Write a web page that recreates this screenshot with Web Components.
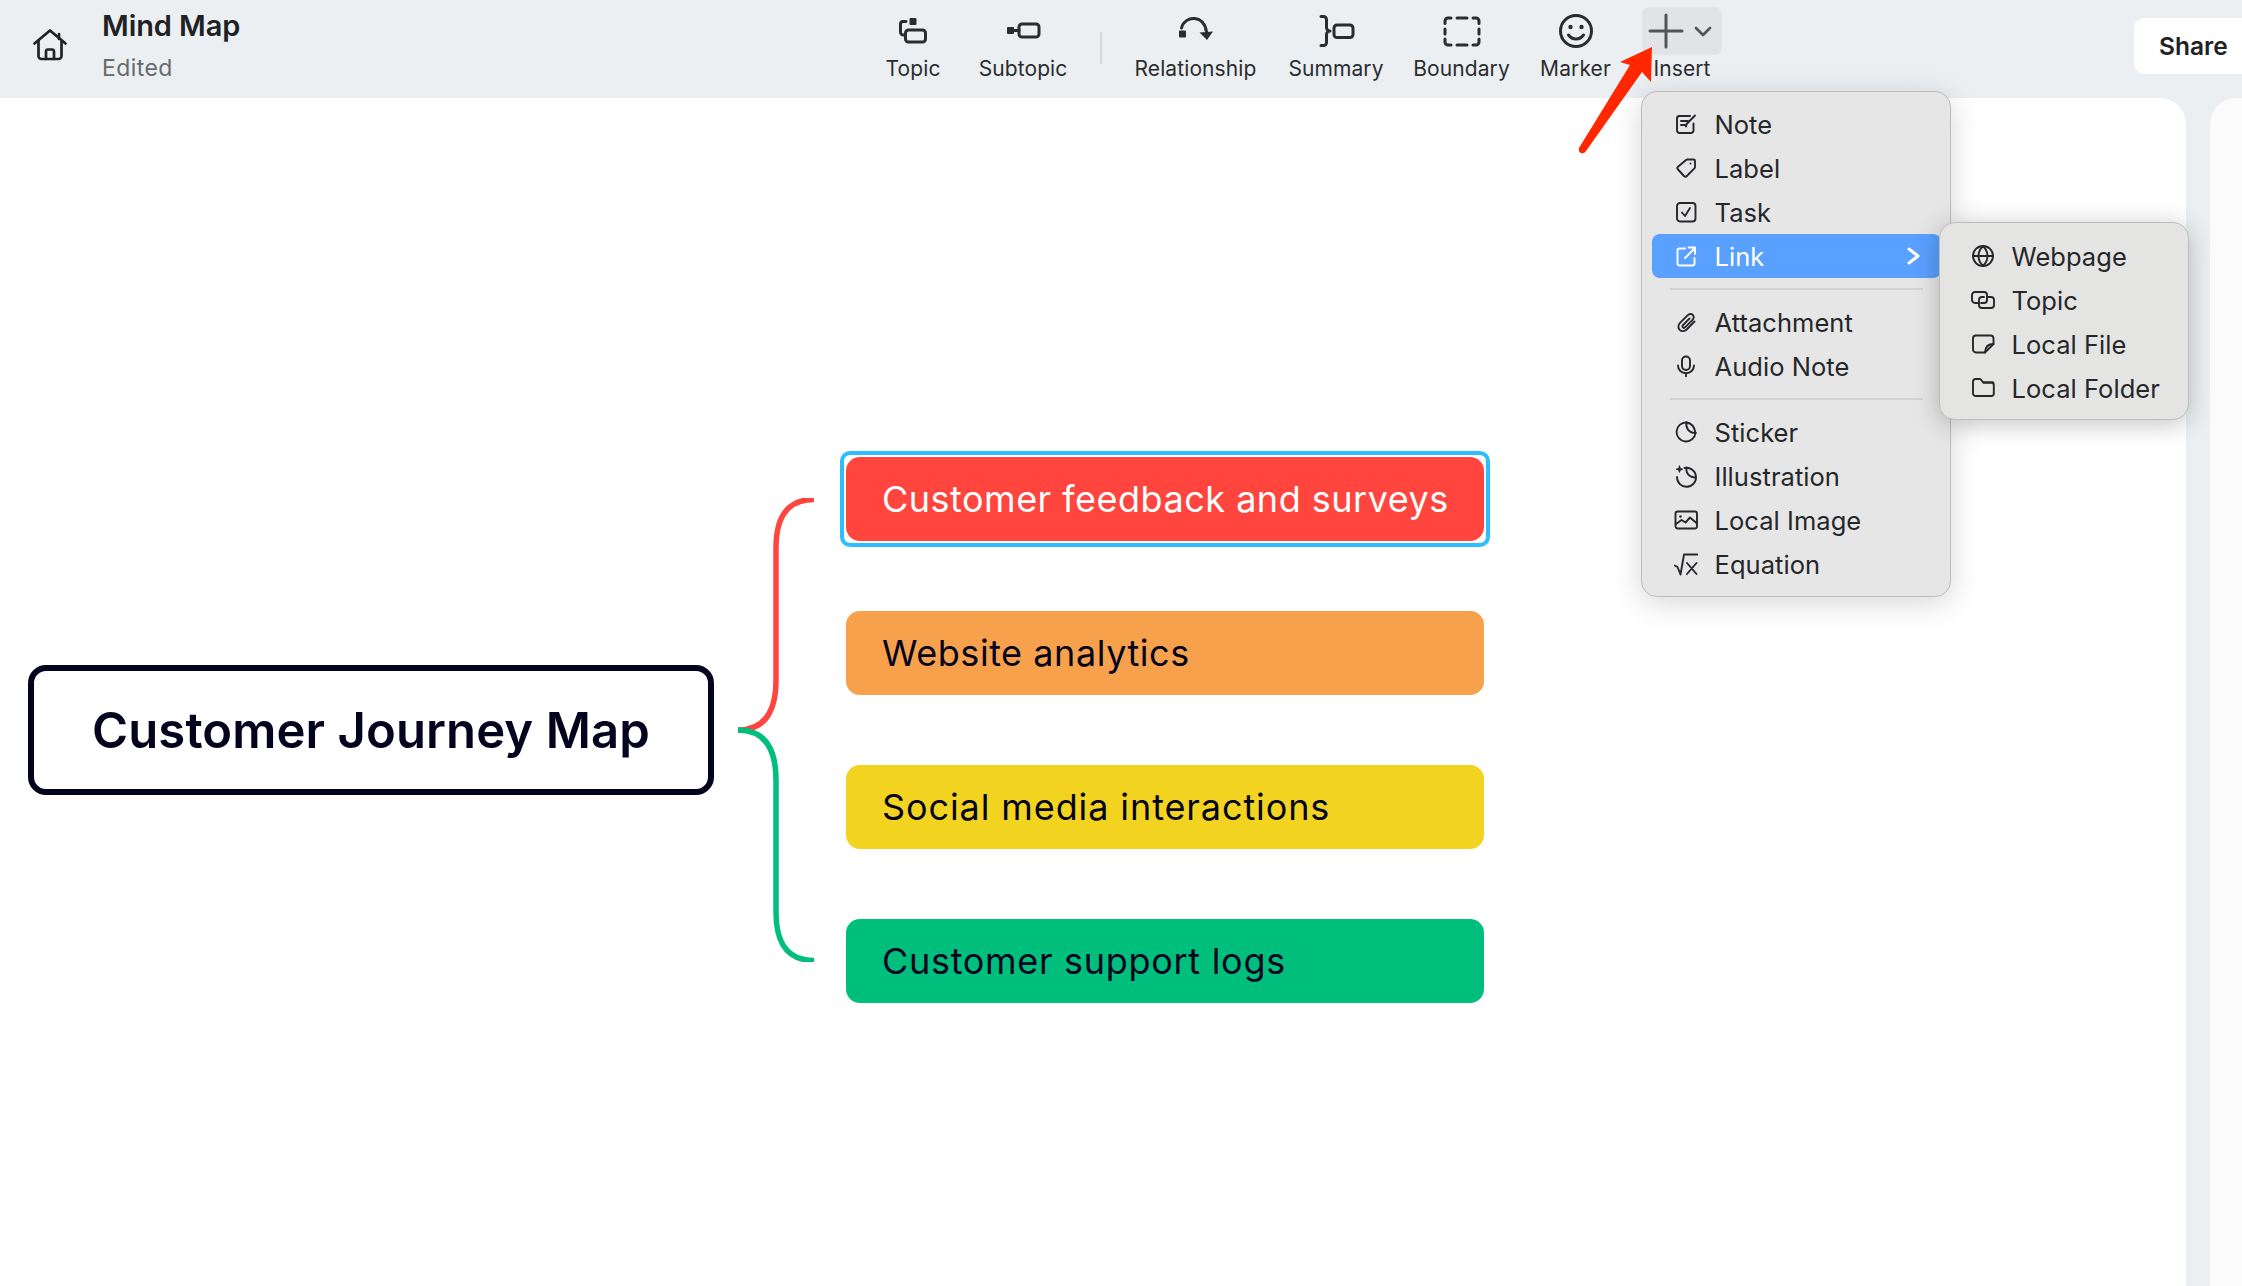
<!DOCTYPE html>
<html lang="en"><head><meta charset="utf-8"><title>Mind Map</title>
<style>
html,body{margin:0;padding:0;height:100%;overflow:hidden;background:#ECEFF2;font-family:Inter,"Liberation Sans",sans-serif}
</style></head>
<body>
<mm-app>
  <mm-topbar slot="top" title-text="Mind Map" status="Edited">
    <mm-tool slot="tools" icon="topic" w="54">Topic</mm-tool>
    <mm-tool slot="tools" icon="subtopic" w="90" style="margin-left:38px">Subtopic</mm-tool>
    <mm-sep slot="tools"></mm-sep>
    <mm-tool slot="tools" icon="relationship" w="123">Relationship</mm-tool>
    <mm-tool slot="tools" icon="summary" w="92" style="margin-left:33px">Summary</mm-tool>
    <mm-tool slot="tools" icon="boundary" w="97" style="margin-left:31px">Boundary</mm-tool>
    <mm-tool slot="tools" icon="marker" w="67" style="margin-left:32px">Marker</mm-tool>
    <mm-tool slot="tools" icon="insert" w="80" active style="margin-left:33px">Insert</mm-tool>
    <mm-share slot="share">Share</mm-share>
  </mm-topbar>
  <mm-canvas slot="canvas">
    <mm-root-topic>Customer Journey Map</mm-root-topic>
    <mm-connector></mm-connector>
    <mm-branches>
      <mm-topic selected bg="#FF453D" fg="#ffffff">Customer feedback and surveys</mm-topic>
      <mm-topic bg="#F7A14D" fg="#050520" style="letter-spacing:.55px">Website analytics</mm-topic>
      <mm-topic bg="#F2D420" fg="#050520" style="letter-spacing:.9px">Social media interactions</mm-topic>
      <mm-topic bg="#00BE7C" fg="#050520" style="letter-spacing:.7px">Customer support logs</mm-topic>
    </mm-branches>
  </mm-canvas>
  <mm-panel slot="panel"></mm-panel>
  <mm-menu slot="overlay" style="left:1641px;top:91px;width:310px">
    <mm-item icon="note">Note</mm-item>
    <mm-item icon="label">Label</mm-item>
    <mm-item icon="task">Task</mm-item>
    <mm-item icon="link" active>Link</mm-item>
    <mm-divider></mm-divider>
    <mm-item icon="attachment">Attachment</mm-item>
    <mm-item icon="audio">Audio Note</mm-item>
    <mm-divider></mm-divider>
    <mm-item icon="sticker">Sticker</mm-item>
    <mm-item icon="illustration">Illustration</mm-item>
    <mm-item icon="image">Local Image</mm-item>
    <mm-item icon="equation">Equation</mm-item>
  </mm-menu>
  <mm-menu slot="overlay" sub style="left:1939px;top:222px;width:250px">
    <mm-item icon="web">Webpage</mm-item>
    <mm-item icon="topiclink">Topic</mm-item>
    <mm-item icon="file">Local File</mm-item>
    <mm-item icon="folder">Local Folder</mm-item>
  </mm-menu>
  <mm-arrow slot="overlay"></mm-arrow>
</mm-app>
<script>
const ICONS={
 /* toolbar icons: viewBox 48 x 48 */
 topic:`<g transform="translate(2,5)"><rect x="18.500" y="6" width="7" height="7" rx="1" fill="currentColor" stroke="none"/><path d="M15 9.500h-3a2.500 2.500 0 0 0-2.500 2.500v8a3 3 0 0 0 3 3h1"/><rect x="14.500" y="18" width="20" height="12" rx="3"/></g>`,
 subtopic:`<g transform="translate(3,4)"><rect x="5" y="16" width="7" height="7" rx="1" fill="currentColor" stroke="none"/><path d="M12 19.500h5"/><rect x="17" y="13" width="20" height="13" rx="3"/></g>`,
 relationship:`<rect x="7" y="23.500" width="7" height="7" rx="1" fill="currentColor" stroke="none"/><path d="M9.500 21C11 14.500 17 11 22.500 11.500c6.500.5 11 5.500 12 13.500"/><path d="M27.500 25.500l13.500-1-6 8.500z" fill="currentColor" stroke="none"/>`,
 summary:`<path d="M9 9.500h2.500a3 3 0 0 1 3 3v8a3.500 3.500 0 0 0 3.500 3.500 3.500 3.500 0 0 0-3.500 3.500v8a3 3 0 0 1-3 3H9"/><rect x="22" y="18" width="19" height="12.500" rx="3"/>`,
 boundary:`<path d="M13 11h-3a3 3 0 0 0-3 3v2.500M19 11h10M35 11h3a3 3 0 0 1 3 3v2.500M41 22v5M41 32v3a3 3 0 0 1-3 3h-3M29 38H19M13 38h-3a3 3 0 0 1-3-3v-3M7 27v-5"/>`,
 marker:`<circle cx="24" cy="24" r="15.500"/><circle cx="18.500" cy="20" r="2.200" fill="currentColor" stroke="none"/><circle cx="29.500" cy="20" r="2.200" fill="currentColor" stroke="none"/><path d="M16.500 28c2 2.700 4.500 4 7.500 4s5.500-1.300 7.500-4"/>`,
 /* menu icons: viewBox 24 x 24 */
 note:`<path d="M19.500 11.500v7a2.500 2.500 0 0 1-2.500 2.500H5.500A2.500 2.500 0 0 1 3 18.500v-12A2.500 2.500 0 0 1 5.500 4H16"/><path d="M7 9h7M7 13h4M12 14.500l.6-2.500L21 3.500"/>`,
 label:`<path d="M13.500 3.500h6a1.500 1.500 0 0 1 1.500 1.500v6a2 2 0 0 1-.6 1.400l-7.600 7.600a2 2 0 0 1-2.800 0L4 13.500a2 2 0 0 1 0-2.800l8-6.700a2 2 0 0 1 1.500-.5z"/><circle cx="16.500" cy="7.500" r="1" fill="currentColor" stroke="none"/>`,
 task:`<rect x="3" y="3" width="18.500" height="18.500" rx="3"/><path d="M8 12.500l3 3.500 5-8"/>`,
 link:`<path d="M11 4.500H5.500A2 2 0 0 0 3.500 6.500v13a2 2 0 0 0 2 2h13a2 2 0 0 0 2-2V14"/><path d="M11 14L21 4M14.500 3.500h6.500V10"/>`,
 attachment:`<path d="M20.500 11.500l-7.800 8c-2 2-5.200 2.200-7 .4s-1.700-5 .3-7l7.800-7.800c1.400-1.400 3.700-1.600 5-.3s1.200 3.600-.2 5l-7.300 7.400c-.7.700-1.800.8-2.400.2s-.5-1.700.2-2.400l6.500-6.600"/>`,
 audio:`<rect x="8" y="2.500" width="8" height="13.500" rx="4"/><path d="M4 11.500c0 4.500 3.500 7.700 8 7.700s8-3.200 8-7.700M12 19.200v3"/>`,
 sticker:`<path d="M12.500 2.500A9.500 9.500 0 1 0 21.500 13"/><path d="M12.500 2.500C17 3 20.500 7 21.500 13"/><path d="M12.500 2.500C11.500 8 15 13 21.500 13"/>`,
 illustration:`<path d="M10.500 4A9.500 9.500 0 1 1 3 13"/><path d="M12.500 3.500C11.500 8.500 15 13.500 21.500 13.500"/><path d="M5.500 2l.8 2.400 2.400.8-2.400.8-.8 2.400-.8-2.400-2.400-.8 2.400-.8z" fill="currentColor" stroke-width="1"/>`,
 image:`<rect x="1.500" y="3.500" width="21.500" height="17" rx="2.200"/><circle cx="6.500" cy="8.500" r="1.300" fill="currentColor" stroke="none"/><path d="M2 16l5.500-4 4 2.500 4.500-5 6.500 5.500"/>`,
 equation:`<path d="M.8 13.500l2.700 1.500 3 7.500 3.500-20h13.500M13 11l9.500 11M22.500 11L13 22"/>`,
 web:`<circle cx="12" cy="12" r="10"/><path d="M2 12h20M12 2c-6 6-6 14 0 20M12 2c6 6 6 14 0 20"/>`,
 topiclink:`<path d="M7 15H4a3 3 0 0 1-3-3V7a3 3 0 0 1 3-3h9a3 3 0 0 1 3 3v5a3 3 0 0 1-3 3h-3"/><path d="M17 9h3a3 3 0 0 1 3 3v5a3 3 0 0 1-3 3h-9a3 3 0 0 1-3-3v-5a3 3 0 0 1 3-3h2"/>`,
 file:`<path d="M14 20.500H5a3 3 0 0 1-3-3v-11a3 3 0 0 1 3-3h14.500a3 3 0 0 1 3 3V12z"/><path d="M14 20.500c.2-5 3-8.500 8.500-8.500"/>`,
 folder:`<path d="M2 17.500V5.500a2.500 2.500 0 0 1 2.500-2.500h4.800l3 3.500h8a2.500 2.500 0 0 1 2.500 2.500v8.500a2.500 2.500 0 0 1-2.500 2.500h-15A2.800 2.800 0 0 1 2 17.500z"/><path d="M12.300 6.500h10"/>`
};
function def(name,css,html,init){
  customElements.define(name,class extends HTMLElement{
    constructor(){super();const s=this.attachShadow({mode:'open'});s.innerHTML=`<style>${css}</style>${typeof html==='function'?html(this):html}`;}
    connectedCallback(){init&&init(this,this.shadowRoot)}
  });
}
def('mm-icon',`:host{display:inline-flex;flex:none;color:inherit}svg{display:block}`,'',(h,s)=>{
  const size=h.getAttribute('size')||24,vb=h.getAttribute('vb')||24,sw=h.getAttribute('sw')||1.9;
  s.innerHTML+=`<svg width="${size}" height="${size}" viewBox="0 0 ${vb} ${vb}" fill="none" stroke="currentColor" stroke-width="${sw}" stroke-linecap="round" stroke-linejoin="round">${ICONS[h.getAttribute('name')]||''}</svg>`;
});
def('mm-app',`:host{display:grid;position:relative;width:2242px;height:1286px;overflow:hidden;background:#ECEFF2;
  grid-template-columns:2186px 1fr;grid-template-rows:98px 1fr;column-gap:24px}
  .t{grid-column:1/3}`,
  `<div class="t"><slot name="top"></slot></div><slot name="canvas"></slot><slot name="panel"></slot><slot name="overlay"></slot>`);
def('mm-topbar',`:host{display:flex;height:98px;align-items:flex-start;color:#222}
  .home{width:102px;height:98px;display:flex;align-items:flex-start;justify-content:flex-start;box-sizing:border-box;padding:28px 0 0 32px}
  .meta{width:784px;padding-top:11px}
  .title{font-weight:600;font-size:29px;line-height:30px;letter-spacing:-.1px;color:#1f2224}
  .st{font-size:23px;line-height:26px;margin-top:14px;color:#666a6d;letter-spacing:.4px}
  .tools{display:flex;align-items:flex-start}
  .share{margin-left:auto}`,
  h=>`<div class="home"><svg width="36" height="34" viewBox="0 0 36 34" fill="none" stroke="#222" stroke-width="2.700" stroke-linecap="round" stroke-linejoin="round"><path d="M2.500 15.500L18 2.500l15.500 13"/><path d="M27 6v5"/><path d="M6.500 13v15a3 3 0 0 0 3 3h17a3 3 0 0 0 3-3V13"/><path d="M14 31v-7.500a2 2 0 0 1 2-2h4a2 2 0 0 1 2 2V31"/></svg></div>
  <div class="meta"><div class="title">${h.getAttribute('title-text')}</div><div class="st">${h.getAttribute('status')}</div></div>
  <div class="tools"><slot name="tools"></slot></div><div class="share"><slot name="share"></slot></div>`);
def('mm-tool',`:host{display:flex;flex-direction:column;align-items:center;padding-top:7px;color:#2a2d2f;flex:none}
  .ic{height:48px;display:flex;align-items:center;justify-content:center}
  .btn{width:80px;height:48px;border-radius:8px;background:#E1E3E6;display:flex;align-items:center;gap:0;color:#555}
  .lb{font-size:21px;line-height:24px;margin-top:2px;letter-spacing:.1px;white-space:nowrap}`,
  h=>{
    const n=h.getAttribute('icon');
    const ic=n==='insert'
     ?`<div class="btn"><svg width="80" height="48" viewBox="0 0 80 48" fill="none" stroke="#555" stroke-linecap="round" stroke-linejoin="round"><path d="M8 24h32M24 8v32" stroke-width="3"/><path d="M54 21l7 7 7-7" stroke-width="2.800"/></svg></div>`
     :`<div class="ic"><mm-icon name="${n}" size="48" vb="48" sw="3"></mm-icon></div>`;
    return `${ic}<div class="lb"><slot></slot></div>`;
  },h=>{h.style.width=h.getAttribute('w')+'px'});
def('mm-sep',`:host{display:block;width:2px;height:32px;background:#D5D8DB;margin:32px 32px 0 32px;flex:none}`,'');
def('mm-share',`:host{display:flex;align-items:center;width:130px;height:56px;box-sizing:border-box;margin:18px -22px 0 0;padding-left:25px;background:#fff;border-radius:10px;font-weight:600;font-size:24.500px;color:#222}`,`<slot></slot>`);
def('mm-canvas',`:host{display:flex;align-items:center;box-sizing:border-box;height:1188px;padding:76px 0 0 28px;background:#fff;border-top-right-radius:26px}`,`<slot></slot>`);
def('mm-panel',`:host{display:block;background:#FBFBFB;border-top-left-radius:26px}`,'');
def('mm-root-topic',`:host{display:flex;align-items:center;justify-content:center;box-sizing:border-box;width:686px;height:130px;border:6px solid #04041F;border-radius:18px;background:#fff;color:#04041F;font-weight:600;font-size:49px;letter-spacing:.1px;white-space:nowrap;flex:none}`,`<slot></slot>`);
def('mm-connector',`:host{display:block;width:132px;height:464px;flex:none}svg{display:block}`,
 `<svg width="132" height="464" viewBox="0 0 132 464" fill="none" stroke-width="5.500"><path d="M24 232C50 232 62 214 62 182V50C62 18 74 1.500 100 1.500" stroke="#FF453D"/><path d="M24 232C50 232 62 250 62 282V414C62 446 74 462.500 100 462.500" stroke="#00BE7C"/></svg>`);
def('mm-branches',`:host{display:flex;flex-direction:column;gap:70px;flex:none}`,`<slot></slot>`);
def('mm-topic',`:host{position:relative;display:flex;align-items:center;box-sizing:border-box;width:638px;height:84px;padding:0 36px;border-radius:14px;font-size:36px;letter-spacing:.5px;white-space:nowrap;background:var(--bg);color:var(--fg)}
  :host([selected])::after{content:"";position:absolute;inset:-6px;border:4px solid #2EBDFF;border-radius:10px}`,`<slot></slot>`,
  h=>{h.style.setProperty('--bg',h.getAttribute('bg'));h.style.setProperty('--fg',h.getAttribute('fg'))});
def('mm-menu',`:host{position:absolute;display:block;box-sizing:border-box;padding:10px 9px 10px 10px;background:#E6E6E6;border:1px solid #BDBDBD;border-radius:16px;box-shadow:0 6px 30px rgba(0,0,0,.16)}
  :host([sub]){padding:11px 9px 9px;background:#E4E4E3;box-shadow:0 4px 26px rgba(0,0,0,.24)}`,`<slot></slot>`);
def('mm-item',`:host{display:flex;align-items:center;height:44px;padding:0 17px 0 21.500px;gap:17px;border-radius:8px;color:#25272a;font-size:25.500px;letter-spacing:.05px;white-space:nowrap}
  :host([active]){background:#59A0FF;color:#fff}
  .ch{margin-left:auto}`,
  h=>`<mm-icon name="${h.getAttribute('icon')}" size="24"></mm-icon><span><slot></slot></span>${h.hasAttribute('active')?`<svg class="ch" width="20" height="24" viewBox="0 0 20 24" fill="none" stroke="#fff" stroke-width="3" stroke-linecap="round" stroke-linejoin="round"><path d="M5 5l9 7-9 7"/></svg>`:''}`);
def('mm-divider',`:host{display:block;height:2px;margin:10px 18px;background:#D2D2D2}`,'');
def('mm-arrow',`:host{position:absolute;left:1570px;top:40px;display:block;pointer-events:none}svg{display:block}`,
 `<svg width="90" height="120" viewBox="1570 40 90 120"><path d="M1652 47L1620 62L1630 65L1579 148Q1578 152 1581 153Q1584 154 1586 151L1642 72L1651 82Z" fill="#FF2600"/></svg>`);
</script>
</body></html>
